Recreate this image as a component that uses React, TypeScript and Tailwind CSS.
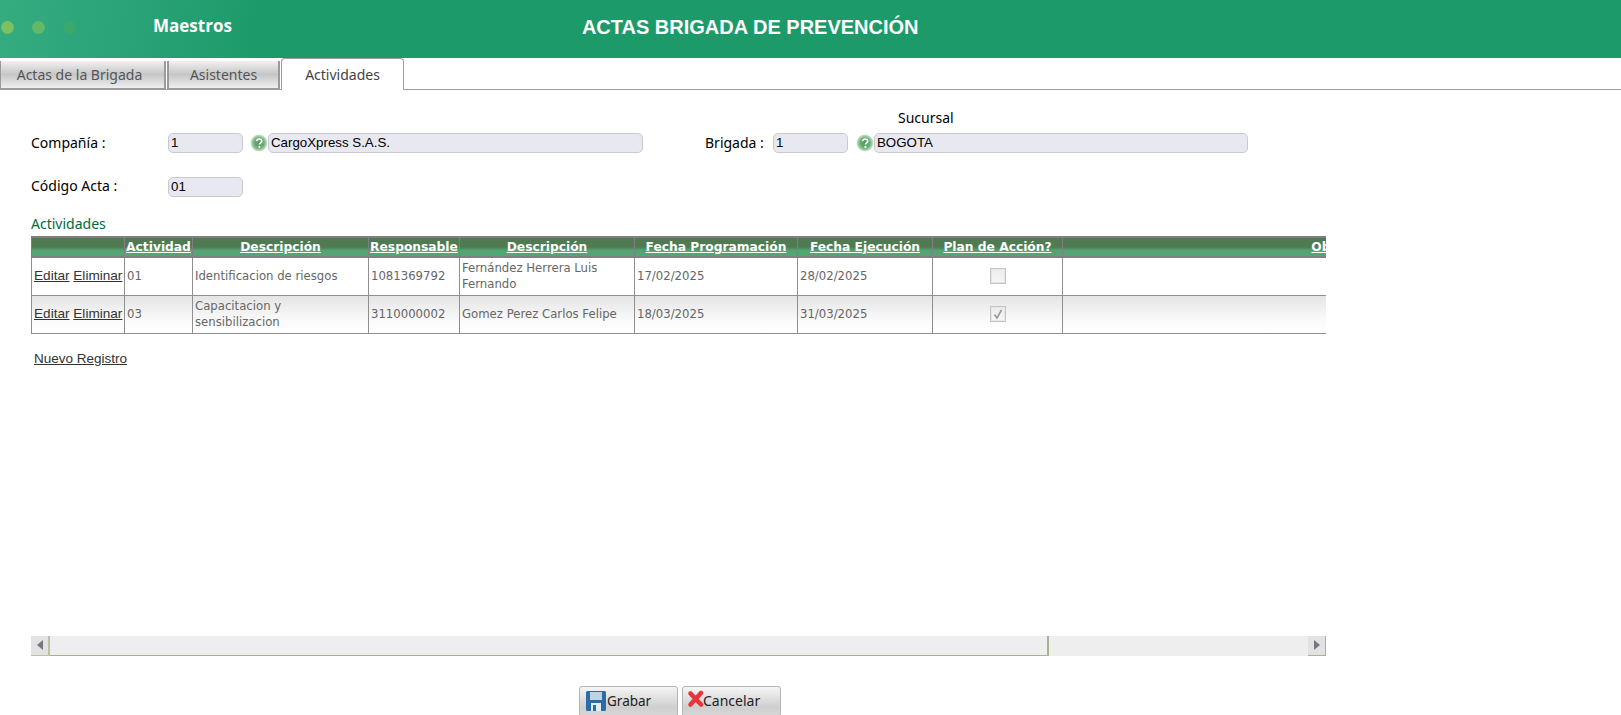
const dejavu = "font-['DejaVu_Sans',sans-serif]";
const noto = "font-['Noto_Sans',sans-serif]";

function HelpIcon() {
  return (
    <svg width="18" height="18" viewBox="0 0 18 18" className="shrink-0">
      <defs>
        <radialGradient id="halo" cx="50%" cy="50%" r="50%">
          <stop offset="0%" stopColor="#4f9a5c" />
          <stop offset="60%" stopColor="#6fae78" />
          <stop offset="100%" stopColor="#d5e8d6" />
        </radialGradient>
      </defs>
      <circle cx="9" cy="9" r="8.5" fill="url(#halo)" />
      <path d="M6.6 7.2c.2-1.4 1.2-2.2 2.6-2.2 1.5 0 2.5.9 2.5 2.1 0 1-.6 1.5-1.3 2-.6.4-.9.7-.9 1.4" fill="none" stroke="#fff" strokeWidth="1.7" />
      <circle cx="9.4" cy="12.9" r="1.1" fill="#fff" />
    </svg>
  );
}

function Field({ value, className }: { value: string; className: string }) {
  return (
    <div className={`h-5 rounded-[5px] border border-[#c9c9d2] bg-[#e8e8f0] pl-[2px] text-[13.3px] leading-[18px] text-black font-['Liberation_Sans',sans-serif] ${className}`}>
      {value}
    </div>
  );
}

function Tab({ label, active, className }: { label: string; active?: boolean; className: string }) {
  return active ? (
    <div className={`-mb-px flex h-[32px] items-center justify-center rounded-t-[4px] border border-b-0 border-[#9c9c9c] bg-white text-[14px] text-[#444] ${className}`}>{label}</div>
  ) : (
    <div className={`flex h-[28px] items-center justify-center border-r-2 border-b border-l-2 border-[#9a9a9a] bg-[linear-gradient(#f1f1f1,#c6c6c6_50%,#efefef)] text-[14px] text-[#555] ${className}`}>{label}</div>
  );
}

const headers = ["", "Actividad", "Descripción", "Responsable", "Descripción", "Fecha Programación", "Fecha Ejecución", "Plan de Acción?", "Observaciones"];

const rows = [
  { id: "01", d: "Identificacion de riesgos", r: "1081369792", n: "Fernández Herrera Luis Fernando", fp: "17/02/2025", fe: "28/02/2025", c: false },
  { id: "03", d: "Capacitacion y sensibilizacion", r: "3110000002", n: "Gomez Perez Carlos Felipe", fp: "18/03/2025", fe: "31/03/2025", c: true },
];

function Check({ on }: { on: boolean }) {
  return (
    <div className="mx-auto -mt-[1px] flex h-4 w-4 items-center justify-center border border-[#c4c4c4] bg-[linear-gradient(#ececec,#f7f7f7)] shadow-[inset_0_0_0_1px_#e6e6e6]">
      {on && (
        <svg width="12" height="12" viewBox="0 0 12 12">
          <path d="M2.5 6.5l2.5 3.5 4.5-8" fill="none" stroke="#999999" strokeWidth="1.6" />
        </svg>
      )}
    </div>
  );
}

export default function App() {
  const cell = `border border-[#8f8f8f] px-[2px] py-0 text-[11.7px] leading-[16px] text-[#666] align-middle ${dejavu}`;
  const btn = "flex h-[31px] w-[99px] items-start rounded-[3px] border border-[#b5b5b5] bg-[linear-gradient(#f5f5f5,#cfcfcf_70%,#d8d8d8)] pt-[3px] text-[14px] text-[#222]";
  return (
    <div className={`h-[715px] w-[1621px] overflow-hidden bg-white ${noto}`}>
      <header className="flex h-[58px] items-center bg-[linear-gradient(100deg,#35ab80_0px,#2aa378_130px,#1d9a6a_260px,#1d9a6a_100%)] pb-[4px]">
        <div className="ml-[1px] flex gap-[18px]">
          <span className="h-[13px] w-[13px] rounded-full bg-[#7cc05f]" />
          <span className="h-[13px] w-[13px] rounded-full bg-[#64b968]" />
          <span className="h-[13px] w-[13px] rounded-full bg-[#3aa96c]" />
        </div>
        <div className="mb-[2px] ml-[77px] font-['Open_Sans',sans-serif] text-[17px] font-bold text-white">Maestros</div>
        <h1 className="ml-[350px] font-['Liberation_Sans',sans-serif] text-[20px] font-bold text-white">ACTAS BRIGADA DE PREVENCIÓN</h1>
      </header>

      <nav className="flex h-[32px] items-start gap-[1px] border-b border-[#9c9c9c]">
        <div className="flex pt-[3px]">
          <Tab label="Actas de la Brigada" className="w-[167px] -ml-[1px] border-l-0 pr-[6px]" />
        </div>
        <div className="flex pt-[3px]">
          <Tab label="Asistentes" className="w-[113px]" />
        </div>
        <Tab label="Actividades" active className="w-[123px]" />
      </nav>

      <section className="pl-[31px] text-[14px] text-black">
        <div className="mt-[17px] flex h-[20px] items-center pl-[867px]">Sucursal</div>
        <div className="mt-[6px] flex h-[20px] items-center">
          <label className="mb-[2px] w-[137px]">Compañía :</label>
          <Field value="1" className="w-[75px]" />
          <span className="ml-[7px]"><HelpIcon /></span>
          <Field value="CargoXpress S.A.S." className="w-[375px]" />
          <label className="mb-[2px] ml-[62px] w-[68px]">Brigada :</label>
          <Field value="1" className="w-[75px]" />
          <span className="ml-[8px]"><HelpIcon /></span>
          <Field value="BOGOTA" className="w-[374px]" />
        </div>
        <div className="mt-[24px] flex h-[20px] items-center">
          <label className="mb-[3px] w-[137px]">Código Acta :</label>
          <Field value="01" className="w-[75px]" />
        </div>
        <div className="mt-[18px] h-[18px] leading-[18px] text-[#006b3c]">Actividades</div>

        <div className="mt-[3px] w-[1295px] overflow-hidden">
          <table className="w-[1631px] table-fixed border-collapse">
            <colgroup>
              <col className="w-[93px]" />
              <col className="w-[68px]" />
              <col className="w-[176px]" />
              <col className="w-[91px]" />
              <col className="w-[175px]" />
              <col className="w-[163px]" />
              <col className="w-[135px]" />
              <col className="w-[130px]" />
              <col />
            </colgroup>
            <thead>
              <tr className="h-[20px] bg-[linear-gradient(#4f7a52_0%,#4f7a52_50%,#54a573_68%,#54a573_100%)]">
                {headers.map((h, i) => (
                  <th key={i} className={`overflow-hidden whitespace-nowrap border-2 border-x-[1px] border-[#808080] p-0 text-center text-[12.25px] font-bold leading-[17px] text-white underline ${dejavu}`}>
                    {h}
                  </th>
                ))}
              </tr>
            </thead>
            <tbody>
              {rows.map((r, i) => (
                <tr key={r.id} className={`h-[38px] ${i === 1 ? "bg-[linear-gradient(#e4e4e4,#fbfbfb_70%,#ffffff)]" : "bg-white"}`}>
                  <td className="whitespace-nowrap border border-[#8f8f8f] px-[2px] align-middle font-['Liberation_Sans',sans-serif] text-[13.6px] text-[#333]">
                    <span className="underline">Editar</span> <span className="underline">Eliminar</span>
                  </td>
                  <td className={cell}>{r.id}</td>
                  <td className={cell}>{r.d}</td>
                  <td className={cell}>{r.r}</td>
                  <td className={cell}>{r.n}</td>
                  <td className={cell}>{r.fp}</td>
                  <td className={cell}>{r.fe}</td>
                  <td className={cell}><Check on={r.c} /></td>
                  <td className={cell}></td>
                </tr>
              ))}
            </tbody>
          </table>
        </div>

        <div className="mt-[16px] ml-[3px] font-['Liberation_Sans',sans-serif] text-[13.5px] leading-[18px] text-[#333] underline">Nuevo Registro</div>

        <div className="mt-[268px] flex h-[20px] w-[1295px] bg-[#eeeeee]">
          <div className="flex w-[19px] items-center justify-center border-r-2 border-b border-[#b8c4a0] bg-[#e2e2e2]">
            <svg width="6" height="10" viewBox="0 0 6 10"><path d="M6 0v10L0 5z" fill="#777" /></svg>
          </div>
          <div className="w-[999px] border-r-2 border-b border-[#a5b48c] bg-[#eeeeee]" />
          <div className="flex-1" />
          <div className="flex w-[18px] items-center justify-center border-r border-b border-[#a5b48c] bg-[#e2e2e2]">
            <svg width="6" height="10" viewBox="0 0 6 10"><path d="M0 0v10l6-5z" fill="#777" /></svg>
          </div>
        </div>

        <div className="mt-[30px] ml-[548px] flex gap-[4px]">
          <button className={`${btn} pl-[6px]`}>
            <svg width="20" height="20" viewBox="0 0 20 20" className="mr-[1px] mt-[1px] shrink-0">
              <rect x="0" y="0" width="20" height="20" rx="1.500" fill="#2b6ca3" />
              <rect x="4" y="1" width="12" height="8" fill="#bcd3e6" />
              <rect x="5" y="12" width="10" height="8" fill="#e3ecf3" />
              <rect x="7" y="14" width="3" height="6" fill="#2b6ca3" />
            </svg>
            <span className="text-[13.5px] leading-[22px]">Grabar</span>
          </button>
          <button className={`${btn} pl-[5px]`}>
            <svg width="15" height="18" viewBox="0 0 15 18" className="shrink-0 overflow-visible">
              <path d="M2.500 3.500L13 14.500M13 3L2.500 14.500" fill="none" stroke="#e8343c" strokeWidth="4.500" strokeLinecap="round" />
            </svg>
            <span className="leading-[22px]">Cancelar</span>
          </button>
        </div>
      </section>
    </div>
  );
}
